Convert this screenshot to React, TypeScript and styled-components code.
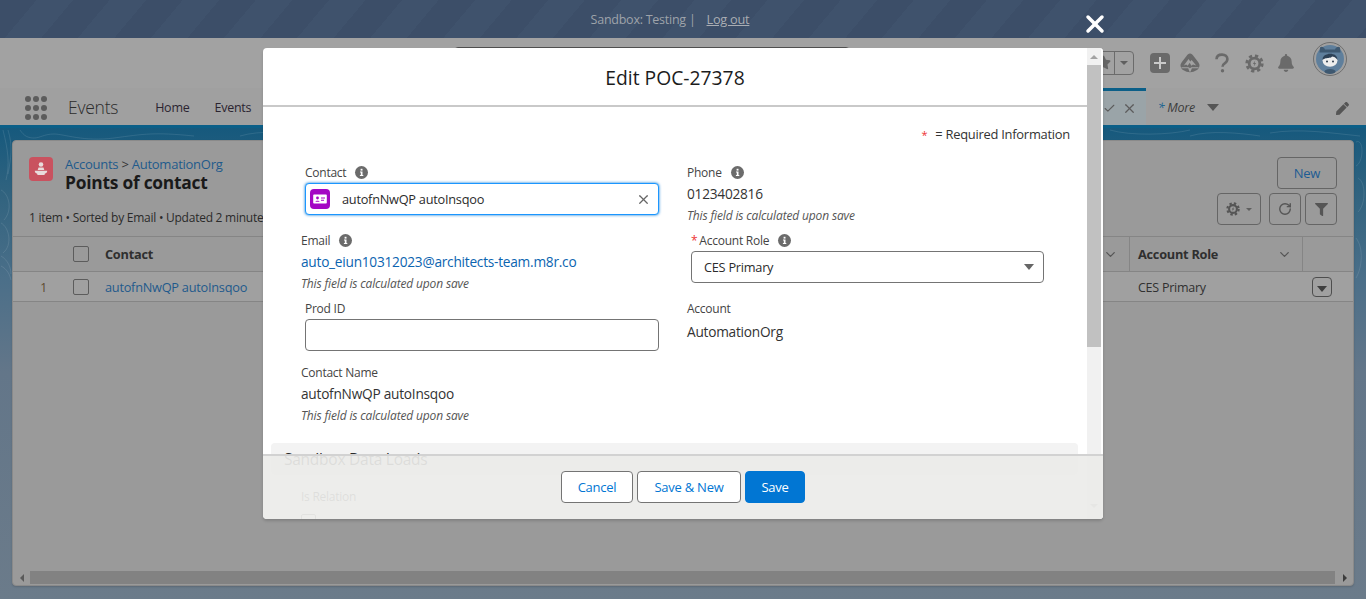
import React from "react";
import styled, { createGlobalStyle } from "styled-components";
import { FaBell, FaFilter, FaPen, FaStar } from "react-icons/fa";
import { RotateCw, X, Check, ChevronDown } from "lucide-react";

const Global = createGlobalStyle`
  html, body { margin: 0; padding: 0; height: 100%; overflow: hidden; }
  #root { height: 100%; }
  * { box-sizing: border-box; }
  body { font-family: "Open Sans", "Noto Sans", "Liberation Sans", sans-serif; letter-spacing: -0.25px; }
`;

const Page = styled.div`
  position: relative; width: 1366px; height: 599px; display: flex; flex-direction: column; overflow: hidden;
`;
const SandboxBar = styled.div`
  height: 38px; flex: none; display: flex; align-items: center; justify-content: center; gap: 11px;
  padding-right: 26px; font-size: 12.5px; color: #9ea3aa;
  background: repeating-linear-gradient(130deg, #3c4e68 0 28px, #3f526c 28px 56px);
`;
const LogOut = styled.a` color: #a9adb3; text-decoration: underline; font-size: 12.75px; `;
const GlobalHeader = styled.div`
  height: 50px; flex: none; display: flex; align-items: flex-start; background: #a2a2a2; padding-left: 454px; padding-right: 19px;
`;
const SearchBox = styled.div`
  width: 396px; height: 32px; margin-top: 9px; border: 1px solid #505050; border-radius: 4px;
`;
const Actions = styled.div` margin-left: auto; display: flex; align-items: center; height: 50px; `;
const FavGroup = styled.div`
  width: 54px; height: 24px; margin-top: -1px; border: 1px solid #6b6b6b; border-radius: 4px; display: flex; align-items: center; color: #666; margin-right: 16px;
`;
const FavStar = styled.div` flex: 1; display: flex; justify-content: flex-end; padding-right: 3px; border-right: 1px solid #6b6b6b; height: 100%; align-items: center; `;
const FavCaret = styled.div` width: 18px; display: flex; justify-content: center; `;
const Caret = styled.span<{ $w?: number; $c?: string }>`
  display: inline-block; width: 0; height: 0;
  border-left: ${p => (p.$w ?? 8) / 2}px solid transparent; border-right: ${p => (p.$w ?? 8) / 2}px solid transparent;
  border-top: ${p => (p.$w ?? 8) * 0.62}px solid ${p => p.$c ?? "#5f5f5f"};
`;
const IconSlot = styled.div<{ $w: number }>` width: ${p => p.$w}px; height: 24px; display: flex; align-items: center; justify-content: center; color: #6a6a6a; `;
const AddBox = styled.div`
  width: 20px; height: 20px; border-radius: 4px; background: #6a6a6a; display: flex; align-items: center; justify-content: center;
`;
const Avatar = styled.div`
  width: 34px; height: 34px; border-radius: 50%; margin-left: 15px; margin-top: -9px; border: 1px solid #6e6e6e; overflow: hidden; background: #a0a0a0; display: flex; align-items: center; justify-content: center;
`;
const NavBar = styled.div`
  height: 40px; flex: none; display: flex; align-items: stretch; background: #a0a0a0; border-bottom: 3px solid #0b5f88; padding-left: 25px; padding-right: 17px; color: #2a2a2a;
`;
const Dots = styled.div`
  display: grid; grid-template-columns: repeat(3, 5px); gap: 3px; align-self: center; margin-top: 2px;
`;
const Dot = styled.span` width: 6px; height: 6px; border-radius: 50%; background: #5c5c5c; `;
const AppName = styled.div` font-size: 17.5px; margin-left: 22px; margin-right: 37px; align-self: center; margin-top: 0; color: #2c2c2c; font-weight: 300; `;
const NavItem = styled.div` font-size: 12.5px; margin-right: 25px; align-self: center; margin-top: 2px; color: #2b2430; `;
const ActiveTab = styled.div`
  margin-left: auto; width: 66px; background: #9aa4a8; border-top: 3px solid #0b5f88; display: flex; align-items: center; justify-content: flex-end; gap: 6px; padding-right: 9px; color: #5c5c5c;
`;
const More = styled.div` font-size: 12.5px; font-style: italic; color: #3c3c3c; margin-left: 12px; align-self: center; margin-top: 2px; span { color: #1a6390; } `;
const MoreCaret = styled.div` align-self: center; margin-left: 12px; margin-top: 2px; display: flex; `;
const Pencil = styled.div` margin-left: 117px; align-self: center; color: #555; margin-top: 3px; display: flex; `;
const Body = styled.div`
  position: relative; flex: 1; padding: 12px 12px 13px 12px; display: flex;
  background: linear-gradient(180deg, #16597d 0, #31637f 14%, #4b6f89 32%, #637689 52%, #6b7b8a 100%);
`;
const Contours = styled.svg` position: absolute; inset: 0; width: 100%; height: 100%; `;
const Card = styled.div`
  position: relative; flex: 1; background: #9a9a9a; border: 1px solid #8a8a8a; border-radius: 4px; display: flex; flex-direction: column; color: #1e1e1e; box-shadow: 0 1px 2px rgba(0,0,0,.15);
`;
const CardHead = styled.div` height: 95px; flex: none; padding: 16px 16px 0 16px; display: flex; justify-content: space-between; `;
const HeadLeft = styled.div` display: flex; flex-direction: column; `;
const TitleRow = styled.div` display: flex; gap: 12px; `;
const ObjectIcon = styled.div`
  width: 24px; height: 24px; border-radius: 4px; background: #c9525f; display: flex; align-items: center; justify-content: center;
`;
const Crumb = styled.div` font-size: 13px; line-height: 15px; color: #1f5a8c; span { color: #333; } `;
const CardTitle = styled.div` font-size: 17.4px; line-height: 20px; font-weight: 700; color: #1a1a1a; `;
const Meta = styled.div` font-size: 12px; line-height: 16px; margin-top: 18px; color: #2a2a2a; white-space: nowrap; `;
const HeadRight = styled.div` display: flex; flex-direction: column; align-items: flex-end; gap: 4px; `;
const Tools = styled.div` display: flex; gap: 4px; `;
const OutlineBtn = styled.div<{ $w: number; $ml?: number }>`
  width: ${p => p.$w}px; height: 32px; margin-left: ${p => p.$ml ?? 0}px; border: 1px solid #656565; border-radius: 4px; display: flex; align-items: center; justify-content: center; gap: 6px; color: #555; font-size: 13px;
`;
const NewLabel = styled.span` color: #1d5c93; `;
const TableRow = styled.div<{ $h: number; $light?: boolean }>`
  height: ${p => p.$h}px; flex: none; display: grid; grid-template-columns: 60px 32px 1fr 174px 50px; align-items: center; border-top: 1px solid #858585; font-size: 12.75px;
  ${p => (p.$light ? "background: #a0a0a0; padding-top: 1px;" : "")}
`;
const Num = styled.div` text-align: center; padding-left: 1px; color: #5c4a2e; font-size: 12px; `;
const CheckBox = styled.div` width: 16px; height: 16px; border: 1px solid #5c5c5c; border-radius: 2px; `;
const HeadCell = styled.div` height: 100%; display: flex; align-items: center; justify-content: space-between; padding-right: 11px; font-weight: 700; color: #2f2f2f; `;
const RoleCell = styled.div<{ $border?: boolean; $pad?: number }>`
  height: 100%; display: flex; align-items: center; justify-content: space-between; padding: 0 10px 0 ${p => p.$pad ?? 8}px;
  ${p => (p.$border ? "border-left: 1px solid #858585; border-right: 1px solid #858585;" : "")}
`;
const LinkCell = styled.div` color: #1f5a8c; `;
const RoleText = styled.span` color: #303030; font-size: 12.5px; `;
const RoleHead = styled.span` font-weight: 700; color: #2f2f2f; `;
const RowAction = styled.div`
  width: 20px; height: 20px; margin-left: 9px; border: 1px solid #4e4e4e; border-radius: 4px; display: flex; align-items: flex-end; justify-content: center; padding-bottom: 4px;
`;
const RowLine = styled.div` border-top: 1px solid #858585; `;
const HScrollWrap = styled.div`
  margin-top: auto; height: 13px; margin-bottom: 1px; display: flex; align-items: center; padding: 0 6px 0 7px;
`;
const HThumb = styled.div` flex: 1; height: 13px; margin: 0 8px 0 6px; background: #828282; `;
const ArrowL = styled.span` width: 0; height: 0; border-top: 4px solid transparent; border-bottom: 4px solid transparent; border-right: 4px solid #5a5a5a; `;
const ArrowR = styled.span` width: 0; height: 0; border-top: 4px solid transparent; border-bottom: 4px solid transparent; border-left: 4px solid #3c3c3c; `;
const CloseX = styled.div` position: absolute; left: 1081px; top: 10px; color: #fff; display: flex; `;

const Modal = styled.div`
  position: absolute; left: 263px; top: 48px; width: 840px; height: 471px; background: #fff; border-radius: 4px; overflow: hidden; display: flex; box-shadow: 0 2px 3px rgba(0,0,0,.16); color: #2b2b2b;
`;
const ModalMain = styled.div` width: 824px; flex: none; display: flex; flex-direction: column; `;
const ModalHeader = styled.div`
  height: 59px; flex: none; border-bottom: 2px solid #c9c9c9; display: flex; align-items: center; justify-content: center; padding-top: 2px; font-size: 19.3px; color: #1c1c1c; letter-spacing: 0; font-weight: 400;
`;
const Required = styled.div`
  font-size: 12.9px; line-height: 16px; text-align: right; padding: 19px 17px 0 0; color: #333; height: 57px; flex: none;
  b { color: #e33; font-weight: 400; margin-right: 8px; font-size: 11px; }
`;
const FormGrid = styled.div`
  display: grid; grid-template-columns: 354px 357px; column-gap: 32px; padding-left: 38px; align-items: start; flex: none;
`;
const Stack = styled.div` display: flex; flex-direction: column; `;
const Label = styled.div<{ $ind?: number; $top: number }>`
  display: flex; align-items: center; gap: 9px; height: 16px; font-size: 12px; color: #444; padding-left: ${p => p.$ind ?? 0}px; margin-top: ${p => p.$top}px;
`;
const Info = styled.span`
  width: 13px; height: 13px; border-radius: 50%; background: #6b6b6b; color: #fff; display: inline-flex; align-items: center; justify-content: center; flex: none;
`;
const Req = styled.span` color: #e33; margin-right: -7px; `;
const InputBox = styled.div<{ $focus?: boolean; $w?: number; $ml: number; $mt: number }>`
  width: ${p => p.$w ?? 354}px; height: 32px; margin-left: ${p => p.$ml}px; margin-top: ${p => p.$mt}px; background: #fff; border-radius: 4px; flex: none;
  border: 1px solid ${p => (p.$focus ? "#1b96ff" : "#747474")}; ${p => (p.$focus ? "box-shadow: 0 0 3px #0176d3;" : "")}
  display: flex; align-items: center; font-size: 12.75px; color: #2b2b2b;
`;
const ContactIcon = styled.div`
  width: 20px; height: 20px; margin-left: 4px; border-radius: 4px; background: #a406c4; display: flex; align-items: center; justify-content: center; flex: none;
`;
const InputText = styled.span` margin-left: 12px; flex: 1; `;
const ClearX = styled.span` display: flex; color: #666; margin-right: 7px; `;
const SelectText = styled.span` margin-left: 12px; flex: 1; `;
const SelectCaret = styled.span` margin-right: 9px; display: flex; `;
const Value = styled.div<{ $link?: boolean; $top: number }>`
  font-size: 13.7px; line-height: 18px; margin-top: ${p => p.$top}px; color: ${p => (p.$link ? "#0b64b0" : "#333")};
`;
const Note = styled.div` font-size: 12px; line-height: 14px; font-style: italic; color: #555; margin-top: 6px; letter-spacing: -0.15px; `;
const Section = styled.div`
  margin: 20px 9px 0 8px; height: 32px; flex: none; background: #f3f3f3; border-radius: 4px; display: flex; align-items: center; padding-left: 13px; font-size: 15.5px; color: #2b2b2b;
`;
const Relation = styled.div` font-size: 12px; line-height: 16px; flex: none; color: #444; padding-left: 38px; margin-top: 14px; `;
const SmallCheck = styled.div` width: 15px; height: 15px; flex: none; margin: 9px 0 0 38px; border: 1px solid #777; border-radius: 2px; `;
const VScroll = styled.div` width: 16px; flex: none; border-right: 2px solid #fff; background: #f1f1f1; display: flex; flex-direction: column; align-items: center; padding-top: 7px; `;
const UpArrow = styled.span` width: 0; height: 0; border-left: 4px solid transparent; border-right: 4px solid transparent; border-bottom: 4px solid #a3a3a3; `;
const VThumb = styled.div` width: 14px; height: 282px; margin-top: 6px; background: #c1c1c1; `;
const DownArrow = styled.span` width: 0; height: 0; margin-top: 157px; border-left: 4px solid transparent; border-right: 4px solid transparent; border-top: 4px solid #a3a3a3; `;
const Footer = styled.div`
  position: absolute; left: 0; right: 0; bottom: 0; height: 65px; background: rgba(236,235,233,.92); border-top: 2px solid #d2d2d2;
  display: flex; justify-content: center; gap: 4px; padding-top: 15px;
`;
const FootBtn = styled.div<{ $primary?: boolean; $w: number }>`
  width: ${p => p.$w}px; height: 32px; border-radius: 4px; font-size: 13px; display: flex; align-items: center; justify-content: center;
  background: ${p => (p.$primary ? "#0176d3" : "#fff")}; color: ${p => (p.$primary ? "#fff" : "#0176d3")};
  border: 1px solid ${p => (p.$primary ? "#0176d3" : "#747474")};
`;

const InfoIcon = () => (
  <Info>
    <svg width="9" height="9" viewBox="0 0 9 9"><rect x="3.6" y="0.8" width="1.9" height="1.8" fill="#fff" /><path d="M3 3.6h2.5v3.4h.8v1H2.9V7h.9V4.600H3z" fill="#fff" /></svg>
  </Info>
);
const GearIcon = ({ size = 20, color = "#6a6a6a" }: { size?: number; color?: string }) => (
  <svg width={size} height={size} viewBox="0 0 20 20" fill="none">
    <circle cx="10" cy="10" r="5.600" stroke={color} strokeWidth="3" />
    <circle cx="10" cy="10" r="8.100" stroke={color} strokeWidth="3" strokeDasharray="3.4 3" />
    <path d="M10.800 6.800 8.300 10.600h1.600l-.7 2.600 2.500-3.800h-1.600z" fill={color} />
  </svg>
);
const QuestionIcon = () => (
  <svg width="16" height="20" viewBox="0 0 16 20" fill="none">
    <path d="M2.500 6.300C2.600 3.300 4.800 1.600 8 1.600c3.200 0 5.400 1.800 5.400 4.500 0 2.100-1.100 3.200-2.700 4.200-1.600 1-2.200 1.800-2.200 3.500" stroke="#6a6a6a" strokeWidth="2.600" />
    <circle cx="8.500" cy="17.800" r="1.700" fill="#6a6a6a" />
  </svg>
);
const TrailheadIcon = () => (
  <svg width="20" height="20" viewBox="0 0 20 20">
    <path d="M10 .6c1.500 0 2.500 1 3.500 2.300l4.800 6.300c1.400 2 1.400 3.400.9 4.700-.6 1.700-1.300 2.500-2.800 3.400-1.800 1-4 2-6.400 2s-4.600-1-6.400-2C2.100 16.400 1.400 15.600.8 13.900c-.5-1.300-.5-2.700.9-4.700l4.800-6.300C7.500 1.600 8.500.6 10 .6z" fill="#6a6a6a" />
    <path d="M3.800 12.500 8.600 6l1.700 2.600L11.600 7l4.600 5.500-3.200-.9-1.700 1.200-1.500-3.100-2.200 3-1.400-1.300z" fill="#a2a2a2" />
    <path d="M1.500 14.300h7.200l1.300 1 1.300-1h7.200v1h-6.600l-1.400 3.500h-1l-1.300-3.500H1.500z" fill="#a2a2a2" />
  </svg>
);
const AstroAvatar = () => (
  <svg width="30" height="30" viewBox="0 0 30 30">
    <circle cx="15" cy="15" r="14" fill="#5f7f9c" />
    <path d="M5 3.500c1.800-1.500 3.800-.5 5 2H20c1.200-2.500 3.200-3.500 5-2l.5 5H4.500z" fill="#3e5870" />
    <ellipse cx="15" cy="16.500" rx="7.500" ry="6.200" fill="#ededed" />
    <path d="M7.500 16c-.5-8 15.500-8.500 15 0-1.500-2.500-4-3.500-5.500-3.500-.5 1-1.500 1.500-2.500 1-.5 1-4.500 0-7 2.500z" fill="#2d4156" />
    <circle cx="12" cy="17.500" r="1" fill="#2b3b4b" /><circle cx="18" cy="17.500" r="1" fill="#2b3b4b" />
    <ellipse cx="15" cy="27.500" rx="5.500" ry="2.500" fill="#3e5870" />
  </svg>
);

export default function App() {
  return (
    <Page>
      <Global />
      <SandboxBar>
        <span>Sandbox: Testing |</span>
        <LogOut>Log out</LogOut>
      </SandboxBar>
      <GlobalHeader>
        <SearchBox />
        <Actions>
          <FavGroup>
            <FavStar><FaStar size={15} /></FavStar>
            <FavCaret><Caret $w={8} /></FavCaret>
          </FavGroup>
          <AddBox>
            <svg width="14" height="14" viewBox="0 0 14 14"><path d="M6 1h2v5h5v2H8v5H6V8H1V6h5z" fill="#c9c9c9" /></svg>
          </AddBox>
          <IconSlot $w={40}><TrailheadIcon /></IconSlot>
          <IconSlot $w={24}><QuestionIcon /></IconSlot>
          <IconSlot $w={40}><GearIcon size={19} /></IconSlot>
          <IconSlot $w={24}><FaBell size={18} /></IconSlot>
          <Avatar><AstroAvatar /></Avatar>
        </Actions>
      </GlobalHeader>
      <NavBar>
        <Dots>
          {Array.from({ length: 9 }).map((_, i) => <Dot key={i} />)}
        </Dots>
        <AppName>Events</AppName>
        <NavItem>Home</NavItem>
        <NavItem>Events</NavItem>
        <ActiveTab>
          <Check size={13} />
          <X size={15} />
        </ActiveTab>
        <More><span>*</span> More</More>
        <MoreCaret><Caret $w={12} $c="#555" /></MoreCaret>
        <Pencil><FaPen size={13} /></Pencil>
      </NavBar>
      <Body>
        <Contours viewBox="0 0 1366 471" preserveAspectRatio="none" fill="none" stroke="#ffffff" strokeOpacity=".1">
          <path d="M3 2c5 20 7 34 3 50M8 2c5 16 3 28 0 44M1 62c8 4 12 20 3 30M1 95c8 4 12 22 2 30M1 128c7 4 10 12 10 18M1 138c6 3 9 9 10 14M20 2c4 6 8 8 14 8s10-4 20-4 30 8 60 4 40-6 80-2M240 8c20-6 50-4 70 0" />
          <path d="M1110 2c20 6 60 5 80 0M1190 8c20-6 50-3 70 0M1270 5c30-5 60 0 90 3" />
          <path d="M1356 14c8-4 8 20 0 24M1358 50c8 4 8 26 0 34M1356 110c8 10 6 30 0 40" />
        </Contours>
        <Card>
          <CardHead>
            <HeadLeft>
              <TitleRow>
                <ObjectIcon>
                  <svg width="16" height="16" viewBox="0 0 16 16" fill="#e8dcdc"><circle cx="8" cy="3.500" r="2.300" /><path d="M5.500 6.500h5l.8 2.500H4.700zM1.800 9.800h12.400c0 1.800-1 2.600-2.400 3l-.3 1.200H4.500l-.3-1.200c-1.400-.4-2.400-1.200-2.400-3z" /></svg>
                </ObjectIcon>
                <div>
                  <Crumb>Accounts <span>&gt;</span> AutomationOrg</Crumb>
                  <CardTitle>Points of contact</CardTitle>
                </div>
              </TitleRow>
              <Meta>1 item • Sorted by Email • Updated 2 minutes ago</Meta>
            </HeadLeft>
            <HeadRight>
              <OutlineBtn $w={60}><NewLabel>New</NewLabel></OutlineBtn>
              <Tools>
                <OutlineBtn $w={44}><GearIcon size={14} color="#555" /><Caret $w={6} /></OutlineBtn>
                <OutlineBtn $w={32} $ml={4}><RotateCw size={14} strokeWidth={2.4} /></OutlineBtn>
                <OutlineBtn $w={32}><FaFilter size={13} /></OutlineBtn>
              </Tools>
            </HeadRight>
          </CardHead>
          <TableRow $h={35}>
            <span />
            <CheckBox />
            <HeadCell>
              Contact
              <ChevronDown size={15} color="#555" />
            </HeadCell>
            <RoleCell $border>
              <RoleHead>Account Role</RoleHead>
              <ChevronDown size={15} color="#555" />
            </RoleCell>
            <span />
          </TableRow>
          <TableRow $h={30} $light>
            <Num>1</Num>
            <CheckBox />
            <LinkCell>autofnNwQP autoInsqoo</LinkCell>
            <RoleCell $pad={9}><RoleText>CES Primary</RoleText></RoleCell>
            <RowAction><Caret $w={10} $c="#3f3f3f" /></RowAction>
          </TableRow>
          <RowLine />
          <HScrollWrap>
            <ArrowL />
            <HThumb />
            <ArrowR />
          </HScrollWrap>
        </Card>
      </Body>
      <CloseX><X size={28} strokeWidth={3} /></CloseX>
      <Modal>
        <ModalMain>
          <ModalHeader>Edit POC-27378</ModalHeader>
          <Required><b>*</b>= Required Information</Required>
          <FormGrid>
            <Stack>
              <Label $ind={4} $top={0}>Contact <InfoIcon /></Label>
              <InputBox $focus $ml={4} $mt={3}>
                <ContactIcon>
                  <svg width="14" height="14" viewBox="0 0 14 14"><path d="M1 2.500h12a.8.800 0 0 1 .8.800v7.400a.8.800 0 0 1-.8.800H1a.8.800 0 0 1-.8-.800V3.300A.8.800 0 0 1 1 2.500z" fill="#fff" /><circle cx="4.500" cy="6" r="1.400" fill="#a406c4" /><path d="M2.300 9.800c.2-1.500 4.200-1.500 4.400 0zM8 5.500h4v1H8zM8 7.800h3v1H8z" fill="#a406c4" /></svg>
                </ContactIcon>
                <InputText>autofnNwQP autoInsqoo</InputText>
                <ClearX><X size={15} /></ClearX>
              </InputBox>
              <Label $top={17}>Email <InfoIcon /></Label>
              <Value $link $top={5}>auto_eiun10312023@architects-team.m8r.co</Value>
              <Note>This field is calculated upon save</Note>
              <Label $ind={4} $top={9}>Prod ID</Label>
              <InputBox $ml={4} $mt={3} />
              <Label $top={13}>Contact Name</Label>
              <Value $top={5}>autofnNwQP autoInsqoo</Value>
              <Note>This field is calculated upon save</Note>
            </Stack>
            <Stack>
              <Label $top={0}>Phone <InfoIcon /></Label>
              <Value $top={5}>0123402816</Value>
              <Note>This field is calculated upon save</Note>
              <Label $ind={4} $top={9}><Req>*</Req>Account Role <InfoIcon /></Label>
              <InputBox $ml={4} $mt={3} $w={353}>
                <SelectText>CES Primary</SelectText>
                <SelectCaret><Caret $w={10} $c="#666" /></SelectCaret>
              </InputBox>
              <Label $top={17}>Account</Label>
              <Value $top={7}>AutomationOrg</Value>
            </Stack>
          </FormGrid>
          <Section>Sandbox Data Loads</Section>
          <Relation>Is Relation</Relation>
          <SmallCheck />
        </ModalMain>
        <VScroll>
          <UpArrow />
          <VThumb />
          <DownArrow />
        </VScroll>
        <Footer>
          <FootBtn $w={72}>Cancel</FootBtn>
          <FootBtn $w={104}>Save &amp; New</FootBtn>
          <FootBtn $w={60} $primary>Save</FootBtn>
        </Footer>
      </Modal>
    </Page>
  );
}
